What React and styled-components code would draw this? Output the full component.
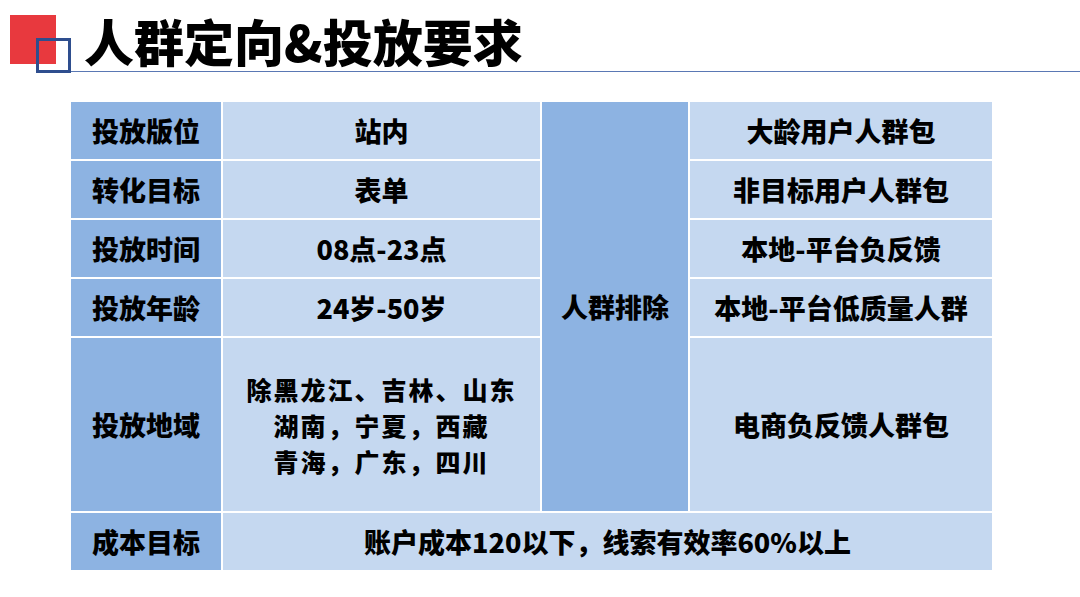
import React from 'react';
import styled, { createGlobalStyle } from 'styled-components';

const GlobalStyle = createGlobalStyle`
  html, body {
    margin: 0;
    padding: 0;
    background: #ffffff;
  }
  body {
    font-family: 'Noto Sans CJK SC', 'Microsoft YaHei', sans-serif;
    color: #000;
  }
`;

const Page = styled.div`
  width: 1080px;
  height: 597px;
  overflow: hidden;
  background: #fff;
`;

const Header = styled.header`
  display: flex;
  align-items: stretch;
  height: 73px;
`;

const Logo = styled.div`
  position: relative;
  width: 71px;
  flex: none;
`;

const RedSquare = styled.div`
  position: absolute;
  left: 10px;
  top: 15px;
  width: 46px;
  height: 49px;
  background: #e8393e;
`;

const BlueFrame = styled.div`
  position: absolute;
  left: 36px;
  top: 38px;
  width: 35px;
  height: 35px;
  box-sizing: border-box;
  border: 3px solid #2e4e8e;
`;

const TitleBar = styled.div`
  flex: 1;
  display: flex;
  align-items: flex-end;
  padding-left: 13px;
  border-bottom: 1.5px solid #5a78b4;
  margin-bottom: 1px;
`;

const Title = styled.h1`
  margin: 0 0 3px;
  font-size: 50px;
  line-height: 56px;
  font-weight: 900;
  letter-spacing: 0;
  color: #000;
`;

const Table = styled.div`
  display: grid;
  grid-template-columns: 150px 317px 146px 302px;
  grid-template-rows: 57px 57px 57px 57px 173px 57px;
  gap: 2px;
  width: 921px;
  margin: 29px 0 0 71px;
  background: #fff;
`;

const Cell = styled.div`
  display: flex;
  flex-direction: column;
  align-items: center;
  justify-content: center;
  text-align: center;
  background: ${p => (p.$head ? '#8db3e2' : '#c5d8f0')};
  font-size: 27px;
  font-weight: 900;
  line-height: 34px;
  grid-row: ${p => p.$row || 'auto'};
  grid-column: ${p => p.$col || 'auto'};
`;

const Line = styled.span`
  display: block;
  font-size: 25px;
  line-height: 36px;
  letter-spacing: 2px;
`;

const rows = [
  ['投放版位', '站内', '大龄用户人群包'],
  ['转化目标', '表单', '非目标用户人群包'],
  ['投放时间', '08点-23点', '本地-平台负反馈'],
  ['投放年龄', '24岁-50岁', '本地-平台低质量人群'],
];

const regions = ['除黑龙江、吉林、山东', '湖南，宁夏，西藏', '青海，广东，四川'];

export default function App() {
  return (
    <Page>
      <GlobalStyle />
      <Header>
        <Logo>
          <RedSquare />
          <BlueFrame />
        </Logo>
        <TitleBar>
          <Title>人群定向&amp;投放要求</Title>
        </TitleBar>
      </Header>
      <Table>
        {rows.map((r, i) => (
          <React.Fragment key={r[0]}>
            <Cell $head $row={i + 1} $col="1">{r[0]}</Cell>
            <Cell $row={i + 1} $col="2">{r[1]}</Cell>
            <Cell $row={i + 1} $col="4">{r[2]}</Cell>
          </React.Fragment>
        ))}
        <Cell $head $row="1 / 6" $col="3">人群排除</Cell>
        <Cell $head $row="5" $col="1">投放地域</Cell>
        <Cell $row="5" $col="2">
          {regions.map(t => (
            <Line key={t}>{t}</Line>
          ))}
        </Cell>
        <Cell $row="5" $col="4">电商负反馈人群包</Cell>
        <Cell $head $row="6" $col="1">成本目标</Cell>
        <Cell $row="6" $col="2 / 5">账户成本120以下，线索有效率60%以上</Cell>
      </Table>
    </Page>
  );
}
